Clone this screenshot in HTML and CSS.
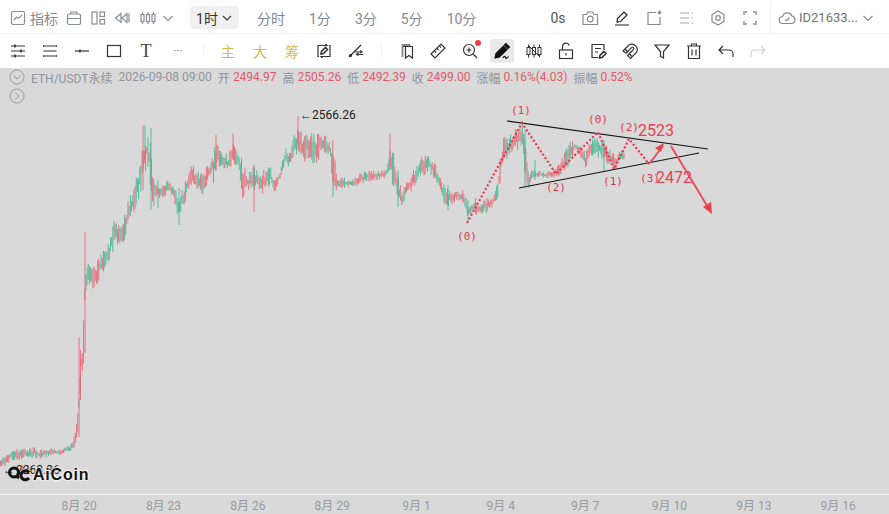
FILE: index.html
```html
<!DOCTYPE html>
<html lang="en">
<head>
    <meta charset="UTF-8">
    <meta name="viewport" content="width=device-width, initial-scale=1.0">
    <title>ETH/USDT 1H</title>
    <link rel="stylesheet" href="styles.css">
</head>
<body>
    <div class="topbar">
        <span class="ind">
            <svg class="ico" viewBox="0 0 20 20"><rect x="3.500" y="3.500" width="13" height="13" rx="1.500"/><path d="M6 12l2.500-3 2 1.500L14 7"/></svg>
            <span class="ind-text">指标</span>
        </span>
        <span class="tb-tool"><svg class="ico" viewBox="0 0 20 20"><rect x="3.500" y="6" width="13" height="10.500" rx="1.500"/><path d="M7 6V4h6v2M3.500 10.500h13"/></svg></span>
        <span class="tb-tool"><svg class="ico" viewBox="0 0 20 20"><rect x="4" y="4" width="5" height="12"/><rect x="12" y="4" width="4.500" height="4.500"/><rect x="12" y="11.500" width="4.500" height="4.500"/></svg></span>
        <span class="tb-tool"><svg class="ico" viewBox="0 0 20 20"><path d="M9 5.500L3.500 10 9 14.500zM15 5.500L10 10l5 4.500zM17 5.500v9"/></svg></span>
        <span class="tb-tool tb-candles"><svg class="ico" viewBox="0 0 20 20"><rect x="3" y="6.500" width="3" height="7"/><rect x="8.500" y="6.500" width="3" height="7"/><rect x="14" y="6.500" width="3" height="7"/><path d="M4.500 4v2.500M4.500 13.500V16M10 4v2.500M10 13.500V16M15.500 4v2.500M15.500 13.500V16"/></svg></span>
        <span class="chev-box"><svg class="chev" viewBox="0 0 12 12"><path d="M1.500 4l4.500 4.500L10.500 4"/></svg></span>
        <span class="period-on">1时<svg class="chev dark" viewBox="0 0 12 12"><path d="M2 4l4 4 4-4"/></svg></span>
        <span class="tab first">分时</span>
        <span class="tab">1分</span>
        <span class="tab">3分</span>
        <span class="tab">5分</span>
        <span class="tab">10分</span>
        <span class="spacer"></span>
        <span class="tool zero">0s</span>
        <span class="tool gray"><svg class="ico" viewBox="0 0 20 20"><path d="M3 6.500h3.500L8 4h4.500L14 6.500h3.500v10H3z"/><circle cx="10.200" cy="11" r="2.800"/></svg></span>
        <span class="tool black"><svg class="ico" viewBox="0 0 20 20"><path d="M5 14l.5-3.500 6.500-6.500 3 3-6.500 6.500zM3 17h14"/></svg></span>
        <span class="tool gray"><svg class="ico" viewBox="0 0 20 20"><path d="M12 4.500H4v12h12V9"/><path d="M15.500 2.500v4M13.500 4.500h4" class="strong"/></svg></span>
        <span class="tool light"><svg class="ico" viewBox="0 0 20 20"><path d="M4 5h9M4 10h9M4 15h9M15.500 5h1.500M15.500 10h1.500M15.500 15h1.500"/></svg></span>
        <span class="tool gray"><svg class="ico" viewBox="0 0 20 20"><path d="M10 3l6 3.500v7L10 17l-6-3.500v-7z"/><circle cx="10" cy="10" r="2.300"/></svg></span>
        <span class="tool light"><svg class="ico thick" viewBox="0 0 20 20"><path d="M4 7V4h3M13 4h3v3M16 13v3h-3M7 16H4v-3"/></svg></span>
        <span class="account">
            <svg class="ico" viewBox="0 0 20 20"><path d="M6 15.500a3.500 3.500 0 0 1-.5-7A5 5 0 0 1 15 8a3.800 3.800 0 0 1-.500 7.500z"/><path d="M8 11.500l2 1 2.500-3"/></svg>
            <span class="acc-id">ID21633...</span>
            <svg class="chev" viewBox="0 0 12 12"><path d="M1.500 4l4.500 4.500L10.500 4"/></svg>
        </span>
    </div>

    <div class="drawbar">
        <span class="tool"><svg class="ico" viewBox="0 0 20 20"><path d="M3 5h14M3 10h14M3 15h14"/><path d="M7 3.500v3M13 8.500v3M7 13.500v3" class="strong"/></svg></span>
        <span class="tool"><svg class="ico" viewBox="0 0 20 20"><path d="M3.500 5h13M3.500 10h13M3.500 15h13"/><path d="M3 5h1M16 5h1M3 15h1M16 15h1" class="strong"/></svg></span>
        <span class="tool"><svg class="ico" viewBox="0 0 20 20"><path d="M3 10h14"/><path d="M8 8.500v3" class="strong"/></svg></span>
        <span class="tool"><svg class="ico" viewBox="0 0 20 20"><rect x="3.500" y="4.500" width="13" height="11"/></svg></span>
        <span class="tool t-glyph">T</span>
        <span class="tool dots">···</span>
        <span class="sep"></span>
        <span class="tool gold">主</span>
        <span class="tool gold">大</span>
        <span class="tool gold">筹</span>
        <span class="tool"><svg class="ico" viewBox="0 0 20 20"><path d="M5 4.500H4v11h1M15 4.500h1v11h-1"/><path d="M5 4.500h8l-1.500-1.500M15 15.500H7l1.500 1.500"/><path d="M7 13l.5-2.500L11.500 6.500l2 2-4 4z" class="strong"/></svg></span>
        <span class="tool"><svg class="ico" viewBox="0 0 20 20"><path d="M3 16L15 4"/><circle cx="4.500" cy="14.500" r="1" class="dotfill"/><path d="M9 11h7M11 13.500h6"/><path d="M14 9.500l2 1.500-2 1M12.500 12l-2 1.500 2 1"/></svg></span>
        <span class="sep"></span>
        <span class="tool"><svg class="ico" viewBox="0 0 20 20"><path d="M7 5.500h9.500V17L13 14.500 9.500 17V5.500"/><path d="M6.500 16V4h8" class="soft"/></svg></span>
        <span class="tool"><svg class="ico" viewBox="0 0 20 20"><path d="M3 13L13 3l4 4L7 17z"/><path d="M6.500 10l1.500 1.500M9 7.500l1.500 1.500M11.500 5l1.500 1.500"/></svg></span>
        <span class="tool mag">
            <svg class="ico" viewBox="0 0 20 20"><circle cx="9" cy="9" r="5.500"/><path d="M13 13l4 4M9 6.500v5M6.500 9h5"/></svg>
            <span class="red-dot"></span>
        </span>
        <span class="tool active"><svg class="ico" viewBox="0 0 20 20"><path d="M3 17l1-4.500 7.500-7.500 3.500 3.500-7.500 7.500z" class="solid"/><path d="M12.500 4l1.500-1.500 3.500 3.500L16 7.500z" class="solid"/><path d="M11 17c1-2 2-2 2.500-.5s1.500 1 3-1"/></svg></span>
        <span class="tool"><svg class="ico fine" viewBox="0 0 20 20"><rect x="3" y="6.500" width="3" height="7"/><rect x="8.500" y="6.500" width="3" height="7"/><rect x="14" y="6.500" width="3" height="7"/><path d="M4.500 3.500v3M4.500 13.500v3M10 3.500v3M10 13.500v3M15.500 3.500v3M15.500 13.500v3M4 4l12 12"/></svg></span>
        <span class="tool"><svg class="ico" viewBox="0 0 20 20"><rect x="3.500" y="9" width="13" height="8.500"/><path d="M6.500 9V5.500a3.500 3.500 0 0 1 6.800-1M10 12v2.500"/></svg></span>
        <span class="tool"><svg class="ico" viewBox="0 0 20 20"><path d="M16 9V3.500H4v13h6M7 7.500h6M7 11h3"/><path d="M11.500 17l.5-2.500 4-4 2 2-4 4z" class="strong"/></svg></span>
        <span class="tool"><svg class="ico" viewBox="0 0 20 20"><path d="M3 10l6-6a5.500 5.500 0 0 1 7.500 7.500l-6 6-3-3 6-6a1.300 1.300 0 0 0-2-1.800L6 12.200z"/><path d="M5 8l3 3M9 12.500l3 3"/></svg></span>
        <span class="tool"><svg class="ico" viewBox="0 0 20 20"><path d="M3 4h14l-5.500 6.500V17l-3-1.500v-5z"/></svg></span>
        <span class="tool"><svg class="ico" viewBox="0 0 20 20"><path d="M3 5h14M7.500 5V3h5v2M4.500 5v12.500h11V5M8 8.500v6M12 8.500v6"/></svg></span>
        <span class="tool"><svg class="ico" viewBox="0 0 20 20"><path d="M3.500 9H13a4 4 0 0 1 4 4v3M7 5L3 9l4 4"/></svg></span>
        <span class="tool pale"><svg class="ico" viewBox="0 0 20 20"><path d="M16.500 9H7a4 4 0 0 0-4 4v3M13 5l4 4-4 4"/></svg></span>
    </div>

    <div class="chart">
        <svg id="plot" class="plot" viewBox="0 68 889 426">
            <g id="candles"></g>
            <path class="trend" d="M507 121L708 149M519 188L699 153"/>
            <path class="wave" d="M467 223L522 123L556 174L598 132L614 169L629 139L649 164"/>
            <path class="arrow" d="M649 164L663 146"/>
            <path class="arrow-head" d="M664 143L655 148L661 152z"/>
            <path class="arrow" d="M671 146L709 209"/>
            <path class="arrow-head" d="M712 214L711 202L703 207z"/>
            <text class="wave-label" x="467" y="240">(0)</text>
            <text class="wave-label" x="521" y="114">(1)</text>
            <text class="wave-label" x="598" y="123">(0)</text>
            <text class="wave-label" x="629" y="131">(2)</text>
            <text class="wave-label" x="556" y="191">(2)</text>
            <text class="wave-label" x="613" y="185">(1)</text>
            <text class="wave-label" x="650" y="182">(3)</text>
            <text class="target" x="638" y="136">2523</text>
            <text class="target" x="656" y="183">2472</text>
            <text class="mark" x="300" y="119">←</text>
            <text class="mark" x="312" y="119">2566.26</text>
            <text class="mark" x="3" y="474">←</text>
            <text class="mark" x="16" y="474">2268.36</text>
        </svg>

        <div class="info">
            <span class="collapse"><svg viewBox="0 0 16 16"><circle cx="8" cy="8" r="7"/><path d="M4.500 6.500L8 10l3.500-3.500"/></svg></span>
            <span class="sym">ETH/USDT永续</span>
            <span class="lbl">2026-09-08 09:00</span>
            <span class="lbl">开</span><span class="val">2494.97</span>
            <span class="lbl">高</span><span class="val">2505.26</span>
            <span class="lbl">低</span><span class="val">2492.39</span>
            <span class="lbl">收</span><span class="val">2499.00</span>
            <span class="lbl">涨幅</span><span class="val">0.16%(4.03)</span>
            <span class="lbl">振幅</span><span class="val">0.52%</span>
        </div>
        <span class="expand"><svg viewBox="0 0 16 16"><circle cx="8" cy="8" r="7"/><path d="M6.500 4.500L10 8l-3.500 3.500"/></svg></span>

        <div class="logo">
            <svg class="logo-mark" viewBox="0 0 26 18"><circle cx="7" cy="6.500" r="4.500" class="lm"/><path d="M9 10l3 2" class="lm"/><path d="M22 6.500a4.500 4.500 0 1 0 0 5.500" class="lm"/><circle cx="15.700" cy="2" r="1.800" class="lm-dot"/></svg>
            <span class="logo-text">AiCoin</span>
        </div>
    </div>

    <div class="axis">
        <span>8月 20</span>
        <span>8月 23</span>
        <span>8月 26</span>
        <span>8月 29</span>
        <span>9月 1</span>
        <span>9月 4</span>
        <span>9月 7</span>
        <span>9月 10</span>
        <span>9月 13</span>
        <span>9月 16</span>
    </div>

    <script src="chart.js"></script>
</body>
</html>
```

FILE: styles.css
```css
* {
    box-sizing: border-box;
}

body {
    margin: 0;
    width: 889px;
    height: 514px;
    overflow: hidden;
    background-color: #d9d9d9;
    font-family: Roboto, "Noto Sans CJK SC", sans-serif;
}

.ico {
    width: 20px;
    height: 20px;
    fill: none;
    stroke: currentColor;
    stroke-width: 1.200;
    display: block;
}
.ico.fine {
    stroke-width: 1;
}
.ico .strong {
    stroke-width: 1.600;
}
.ico .soft {
    stroke: #888;
    stroke-width: 1.800;
}
.ico .solid {
    fill: currentColor;
}
.ico .dotfill {
    fill: currentColor;
}
.ico.thick {
    stroke-width: 1.800;
}

/* top row */
.topbar {
    height: 34px;
    padding: 2px 0 0 8px;
    display: flex;
    align-items: center;
    background-color: #fff;
    border-bottom: 1px solid #f1f1f1;
    color: #8a8e93;
    font-size: 14px;
}
.ind {
    display: flex;
    align-items: center;
    gap: 2px;
    width: 54px;
}
.ind-text {
    color: #85898f;
}
.tb-tool {
    width: 24px;
    display: flex;
    justify-content: center;
}
.tb-candles {
    margin-left: 2px;
}
.chev-box {
    width: 16px;
    display: flex;
    justify-content: center;
}
.chev {
    width: 12px;
    height: 12px;
    fill: none;
    stroke: #888;
    stroke-width: 1.100;
}
.chev.dark {
    stroke: #333;
    margin-left: 3px;
}
.period-on {
    margin-left: 14px;
    width: 49px;
    height: 23px;
    border-radius: 4px;
    background-color: #f0f0f0;
    color: #333;
    display: flex;
    align-items: center;
    justify-content: center;
}
.tab {
    padding: 0 12px;
    color: #85898f;
}
.tab.first {
    margin-left: 6px;
}
.spacer {
    flex: 1;
}
.tool {
    width: 32px;
    height: 24px;
    display: flex;
    align-items: center;
    justify-content: center;
    color: #333;
}
.zero {
    color: #555;
    font-size: 14px;
}
.tool.gray {
    color: #888;
}
.tool.black {
    color: #222;
}
.tool.light {
    color: #a8a8a8;
}
.tool.pale {
    color: #d0d0d0;
}
.account {
    margin-left: 4px;
    width: 119px;
    height: 32px;
    padding-left: 6px;
    border-left: 1px solid #f1f1f1;
    display: flex;
    align-items: center;
    color: #888;
}
.acc-id {
    margin-left: 2px;
    width: 63px;
    font-size: 13px;
    color: #6f7377;
}

/* drawing tools row */
.drawbar {
    height: 34px;
    padding-left: 2px;
    display: flex;
    align-items: center;
    background-color: #fff;
}
.sep {
    width: 18px;
    display: flex;
    justify-content: center;
}
.sep::after {
    content: "";
    width: 1px;
    height: 14px;
    background-color: #f0f0f0;
}
.t-glyph {
    font-family: "Liberation Serif", serif;
    font-size: 18px;
    color: #444;
}
.dots {
    color: #888;
    font-size: 12px;
}
.gold {
    color: #dcb44d;
    font-size: 14px;
}
.mag {
    position: relative;
}
.red-dot {
    position: absolute;
    top: 1px;
    right: 5px;
    width: 6px;
    height: 6px;
    border-radius: 50%;
    background-color: #ee3d4a;
}
.tool.active {
    width: 24px;
    margin: 0 4px;
    border-radius: 3px;
    background-color: #e9e9e9;
    color: #111;
}

/* chart */
.chart {
    position: relative;
    height: 427px;
    border-bottom: 1px solid #f5f5f5;
    background-color: #d9d9d9;
}
.plot {
    position: absolute;
    top: 0;
    left: 0;
    width: 889px;
    height: 426px;
}
.trend {
    fill: none;
    stroke: #151515;
    stroke-width: 1.200;
}
.wave {
    fill: none;
    stroke: #e63a4b;
    stroke-width: 2.200;
    stroke-dasharray: 2 2.200;
}
.arrow {
    fill: none;
    stroke: #ea4f5c;
    stroke-width: 2;
}
.arrow-head {
    fill: #e8404f;
}
.wave-label {
    font-family: "DejaVu Sans Mono", monospace;
    font-size: 11px;
    fill: #e23a4c;
    text-anchor: middle;
}
.target {
    font-family: Roboto, sans-serif;
    font-size: 16px;
    fill: #e8404f;
}
.mark {
    font-family: Roboto, sans-serif;
    font-size: 12px;
    fill: #222;
}
.info {
    position: absolute;
    top: 0;
    left: 9px;
    height: 18px;
    display: flex;
    align-items: center;
    font-size: 12px;
    color: #8f949c;
    white-space: nowrap;
}
.collapse,
.expand {
    width: 16px;
    height: 16px;
}
.collapse svg,
.expand svg {
    display: block;
    fill: none;
    stroke: #8f949c;
    stroke-width: 0.900;
}
.sym {
    margin-left: 6px;
}
.lbl {
    margin-left: 6px;
}
.val {
    margin-left: 3px;
    color: #e25a69;
}
.expand {
    position: absolute;
    top: 20px;
    left: 9px;
}
.logo {
    position: absolute;
    top: 398px;
    left: 7px;
    display: flex;
    align-items: center;
}
.logo-mark {
    width: 26px;
    height: 18px;
}
.lm {
    fill: none;
    stroke: #111;
    stroke-width: 3;
}
.lm-dot {
    fill: #e8604c;
}
.logo-text {
    font-family: "Liberation Sans", sans-serif;
    font-weight: 700;
    font-size: 16px;
    letter-spacing: 0.800px;
    color: #111;
    text-shadow: 0 0 2px #fff, 0 0 2px #fff, 0 0 3px #fff;
}

/* time axis */
.axis {
    height: 19px;
    padding-left: 37px;
    display: grid;
    grid-template-columns: repeat(10, 84.330px);
    align-items: center;
    font-size: 12px;
    color: #969aa2;
    text-align: center;
}
```

FILE: chart.js
```js
// x, top y, bottom y of the price range, read off the picture
const ranges = [
    [0, 462, 470], [5, 452, 468], [10, 450, 462], [20, 448, 460], [35, 447, 458], [40, 450, 460],
    [50, 448, 456], [60, 449, 456], [70, 444, 452], [75, 435, 448], [78, 410, 440], [79, 380, 420],
    [81, 355, 372], [83, 352, 372], [84, 293, 360], [85, 280, 295], [88, 258, 288], [92, 268, 292],
    [96, 262, 285], [100, 250, 280], [105, 245, 275], [110, 235, 262], [115, 215, 250], [120, 222, 245],
    [125, 208, 240], [130, 195, 220], [135, 178, 212], [140, 160, 195], [143, 130, 190], [147, 135, 165],
    [151, 140, 190], [153, 178, 208], [158, 182, 200], [163, 185, 198], [168, 180, 195], [173, 186, 198],
    [178, 190, 225], [183, 188, 208], [188, 170, 195], [192, 160, 190], [197, 170, 190], [203, 172, 195],
    [210, 160, 180], [215, 140, 185], [218, 133, 170], [223, 150, 175], [228, 155, 170], [233, 140, 165],
    [238, 150, 172], [243, 160, 202], [248, 175, 190], [253, 165, 195], [258, 170, 190], [263, 168, 195],
    [270, 165, 185], [275, 180, 192], [280, 170, 180], [285, 145, 168], [290, 150, 168], [295, 132, 160],
    [298, 125, 150], [303, 135, 165], [308, 133, 160], [315, 133, 165], [323, 130, 155], [330, 140, 160],
    [333, 140, 197], [337, 175, 190], [345, 178, 188], [352, 180, 186], [360, 172, 186], [370, 170, 182],
    [385, 170, 178], [388, 160, 178], [390, 140, 175], [394, 150, 195], [398, 175, 200], [402, 190, 206],
    [410, 176, 192], [416, 165, 190], [420, 155, 180], [428, 155, 172], [435, 160, 182], [441, 178, 192],
    [445, 185, 210], [450, 190, 206], [458, 190, 200], [464, 188, 208], [468, 205, 220], [475, 197, 215],
    [480, 205, 214], [485, 195, 215], [490, 196, 210], [495, 192, 206], [498, 170, 200], [503, 138, 165],
    [510, 135, 155], [518, 126, 150], [523, 120, 145], [525, 132, 186], [528, 170, 190], [535, 170, 178],
    [545, 172, 178], [555, 168, 178], [560, 162, 176], [565, 150, 172], [570, 140, 165], [575, 140, 152],
    [580, 145, 156], [585, 150, 172], [590, 140, 156], [596, 133, 155], [601, 135, 162], [606, 145, 165],
    [611, 150, 168], [616, 155, 170], [620, 150, 162], [625, 148, 160]
];

// long single wicks that the range table would smooth over
const spikes = [
    [79, 337, 437, 'r'], [80.5, 350, 400, 'r'], [85, 232, 353, 'r'], [143, 125, 190, 'r'], [145, 125, 160, 'g'],
    [151, 128, 210, 'g'], [158, 180, 208, 'g'], [179, 188, 225, 'g'], [216, 135, 170, 'r'], [233, 133, 160, 'r'],
    [254, 165, 212, 'r'], [298, 116, 150, 'r'], [333, 155, 197, 'g'], [390, 133, 170, 'r'], [398, 170, 207, 'g'],
    [448, 185, 210, 'g'], [468, 200, 222, 'g'], [525, 130, 186, 'g'], [535, 160, 180, 'g'], [604, 140, 172, 'g']
];

let seed = 7;
function rand() {
    seed = (seed * 16807) % 2147483647;
    return seed / 2147483647;
}

function rangeAt(x) {
    let i = 0;
    while (i < ranges.length - 2 && ranges[i + 1][0] < x) i++;
    const a = ranges[i], b = ranges[i + 1];
    const t = (x - a[0]) / (b[0] - a[0]);
    return [a[1] + (b[1] - a[1]) * t, a[2] + (b[2] - a[2]) * t];
}

function wick(x, top, bot) {
    return 'M' + x.toFixed(2) + ' ' + top.toFixed(1) + 'V' + bot.toFixed(1);
}

function drawCandles() {
    let red = '', green = '', last = rangeAt(0);
    for (let x = 0.5; x < 625; x += 1.17) {
        const r = rangeAt(x);
        const h = r[1] - r[0];
        const top = r[0] + rand() * h * 0.42;
        const bot = r[1] - rand() * h * 0.42;
        // rising stretch draws mostly red, falling mostly green
        const rising = (r[0] + r[1]) < (last[0] + last[1]);
        if (rand() < (rising ? 0.62 : 0.4)) red += wick(x, top, bot);
        else green += wick(x, top, bot);
        last = r;
    }
    spikes.forEach(s => {
        if (s[3] === 'r') red += wick(s[0], s[1], s[2]);
        else green += wick(s[0], s[1], s[2]);
    });
    document.getElementById('candles').innerHTML =
        '<path d="' + green + '" fill="none" stroke="#3db792" stroke-width="1" opacity="0.85"/>' +
        '<path d="' + red + '" fill="none" stroke="#e8606e" stroke-width="1" opacity="0.85"/>';
}

drawCandles();
```
